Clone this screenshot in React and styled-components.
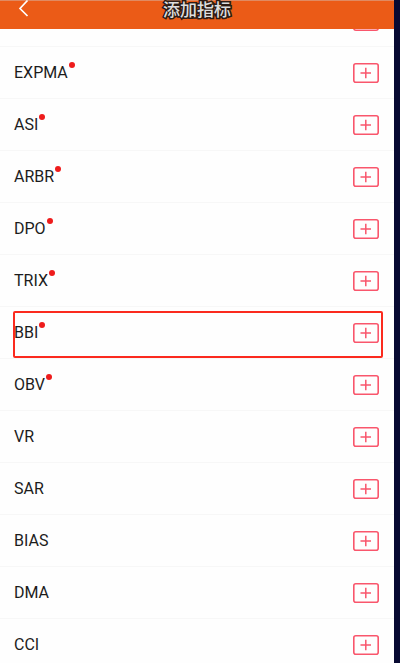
import React, { useLayoutEffect, useRef } from 'react';
import styled, { createGlobalStyle } from 'styled-components';

const indicators = [
    { name: '' },
    { name: 'EXPMA', isNew: true },
    { name: 'ASI', isNew: true },
    { name: 'ARBR', isNew: true },
    { name: 'DPO', isNew: true },
    { name: 'TRIX', isNew: true },
    { name: 'BBI', isNew: true, marked: true },
    { name: 'OBV', isNew: true },
    { name: 'VR' },
    { name: 'SAR' },
    { name: 'BIAS' },
    { name: 'DMA' },
    { name: 'CCI' },
];

function App() {
    const listRef = useRef(null);

    // the list opens scrolled past most of its first row
    useLayoutEffect(() => {
        listRef.current.scrollTop = 34;
    }, []);

    return (
        <Page>
            <GlobalStyle />
            <Screen>
                <Header>
                    <BackButton type="button" aria-label="返回">
                        <svg width="11" height="18" viewBox="0 0 11 18" fill="none" stroke="#fff" strokeWidth="1.7">
                            <path d="M9.5 1.5 L2 9.5 L9.5 17" />
                        </svg>
                    </BackButton>
                    <Title>添加指标</Title>
                </Header>
                <List ref={listRef}>
                    {indicators.map((item, i) => (
                        <Row key={i} $marked={item.marked}>
                            <Name $isNew={item.isNew}>{item.name}</Name>
                            <AddButton type="button" aria-label={`添加 ${item.name}`}>
                                <svg width="26" height="20" viewBox="0 0 26 20" fill="none" stroke="#f9566c">
                                    <rect x="0.8" y="0.8" width="24.4" height="18.4" rx="2" strokeWidth="1.6" />
                                    <path d="M7.5 10 H18 M12.8 4.8 V15.2" strokeWidth="1.5" />
                                </svg>
                            </AddButton>
                        </Row>
                    ))}
                </List>
            </Screen>
        </Page>
    )
}

export default App

const GlobalStyle = createGlobalStyle`
    body {
        margin: 0;
        font-family: Roboto, "Noto Sans CJK SC", sans-serif;
    }

    * {
        box-sizing: border-box;
    }
`
const Page = styled.div`
    height: 100vh;
    padding-right: 6px;
    background: #080a32;
`
const Screen = styled.main`
    height: 100%;
    display: flex;
    flex-direction: column;
    background: #fefefe;
`
const Header = styled.header`
    height: 29px;
    flex-shrink: 0;
    display: grid;
    grid-template-columns: 48px 1fr 48px;
    align-items: start;
    background: #eb5b17;
    border-top: 1px solid #e08a62;
`
const BackButton = styled.button`
    display: flex;
    padding: 0 0 0 18px;
    margin-top: -2px;
    border: 0;
    background: none;
    cursor: pointer;
`
const Title = styled.h1`
    margin: 0;
    font-size: 17px;
    line-height: 18px;
    font-weight: 500;
    text-align: center;
    color: #dedede;
    -webkit-text-stroke: 3px #2b1c16;
    paint-order: stroke fill;
`
const List = styled.ul`
    flex: 1;
    min-height: 0;
    margin: 0;
    padding: 0;
    list-style: none;
    overflow-y: auto;
    scrollbar-width: none;
`
const Row = styled.li`
    position: relative;
    height: 52px;
    padding: 0 15px 0 14px;
    display: flex;
    align-items: center;
    justify-content: space-between;
    border-bottom: 1px solid #f7f7f7;

    &::after {
        content: ${props => props.$marked ? '""' : 'none'};
        position: absolute;
        inset: 4px 11px 0 13px;
        border: 2px solid #fb2a1e;
        border-radius: 2px;
        pointer-events: none;
    }
`
const Name = styled.span`
    position: relative;
    font-size: 16px;
    line-height: 20px;
    color: #1c1c1c;

    &::after {
        content: ${props => props.$isNew ? '""' : 'none'};
        position: absolute;
        top: -1px;
        right: -7px;
        width: 6px;
        height: 6px;
        border-radius: 50%;
        background: #ee1c1c;
    }
`
const AddButton = styled.button`
    display: flex;
    padding: 0;
    border: 0;
    background: none;
    cursor: pointer;
`
